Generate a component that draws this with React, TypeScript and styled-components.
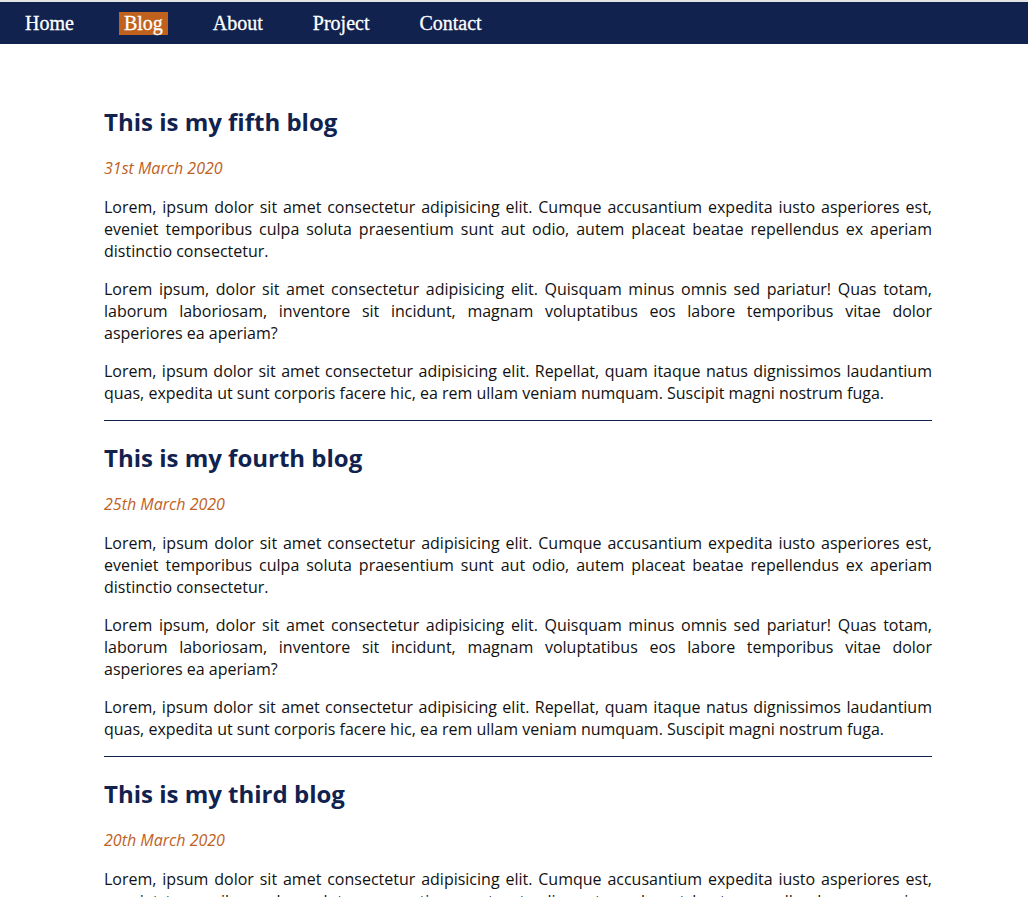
import styled, { createGlobalStyle } from "styled-components";

const NAVY = "#11224f";
const ORANGE = "#c0611e";

const posts = [
  { title: "This is my fifth blog", date: "31st March 2020" },
  { title: "This is my fourth blog", date: "25th March 2020" },
  { title: "This is my third blog", date: "20th March 2020" },
];

const paragraphs = [
  "Lorem, ipsum dolor sit amet consectetur adipisicing elit. Cumque accusantium expedita iusto asperiores est, eveniet temporibus culpa soluta praesentium sunt aut odio, autem placeat beatae repellendus ex aperiam distinctio consectetur.",
  "Lorem ipsum, dolor sit amet consectetur adipisicing elit. Quisquam minus omnis sed pariatur! Quas totam, laborum laboriosam, inventore sit incidunt, magnam voluptatibus eos labore temporibus vitae dolor asperiores ea aperiam?",
  "Lorem, ipsum dolor sit amet consectetur adipisicing elit. Repellat, quam itaque natus dignissimos laudantium quas, expedita ut sunt corporis facere hic, ea rem ullam veniam numquam. Suscipit magni nostrum fuga.",
];

const links = ["Home", "Blog", "About", "Project", "Contact"];

export default function App() {
  return (
    <>
      <GlobalStyle />
      <Nav>
        <NavList>
          {links.map((l) => (
            <li key={l}>
              <NavLink href="#" $active={l === "Blog"}>
                {l}
              </NavLink>
            </li>
          ))}
        </NavList>
      </Nav>
      <Main>
        {posts.map((p) => (
          <Post key={p.title}>
            <Title>{p.title}</Title>
            <Date>{p.date}</Date>
            {paragraphs.map((t, i) => (
              <Text key={i}>{t}</Text>
            ))}
            <Rule />
          </Post>
        ))}
      </Main>
    </>
  );
}

const GlobalStyle = createGlobalStyle`
  body {
    margin: 0;
    background: #fff;
    border-top: 2px solid #e4e4e4;
    font-family: "Open Sans", "Liberation Sans", sans-serif;
  }
`;

const Nav = styled.nav`
  height: 42px;
  background: ${NAVY};
  display: flex;
  align-items: center;
`;

const NavList = styled.ul`
  display: flex;
  gap: 40px;
  list-style: none;
  margin: 0;
  padding: 0 0 0 20px;
`;

const NavLink = styled.a<{ $active?: boolean }>`
  display: block;
  padding: 0 5px;
  font-family: "Liberation Serif", "Times New Roman", serif;
  font-size: 20px;
  line-height: 23px;
  color: #fff;
  text-decoration: none;
  -webkit-text-stroke: 0.3px #fff;
  background: ${(p) => (p.$active ? ORANGE : "transparent")};
`;

const Main = styled.main`
  padding: 41px 96px 0 104px;
`;

const Post = styled.article``;

const Title = styled.h2`
  margin: 20px 0 19px;
  font-size: 24px;
  font-weight: 700;
  color: ${NAVY};
`;

const Date = styled.p`
  margin: 0 0 17px;
  font-size: 16px;
  font-style: italic;
  color: ${ORANGE};
`;

const Text = styled.p`
  margin: 0 0 16px;
  font-size: 16px;
  line-height: 22px;
  color: #111;
  text-align: justify;
`;

const Rule = styled.hr`
  margin: 0;
  border: none;
  border-top: 1px solid ${NAVY};
`;
